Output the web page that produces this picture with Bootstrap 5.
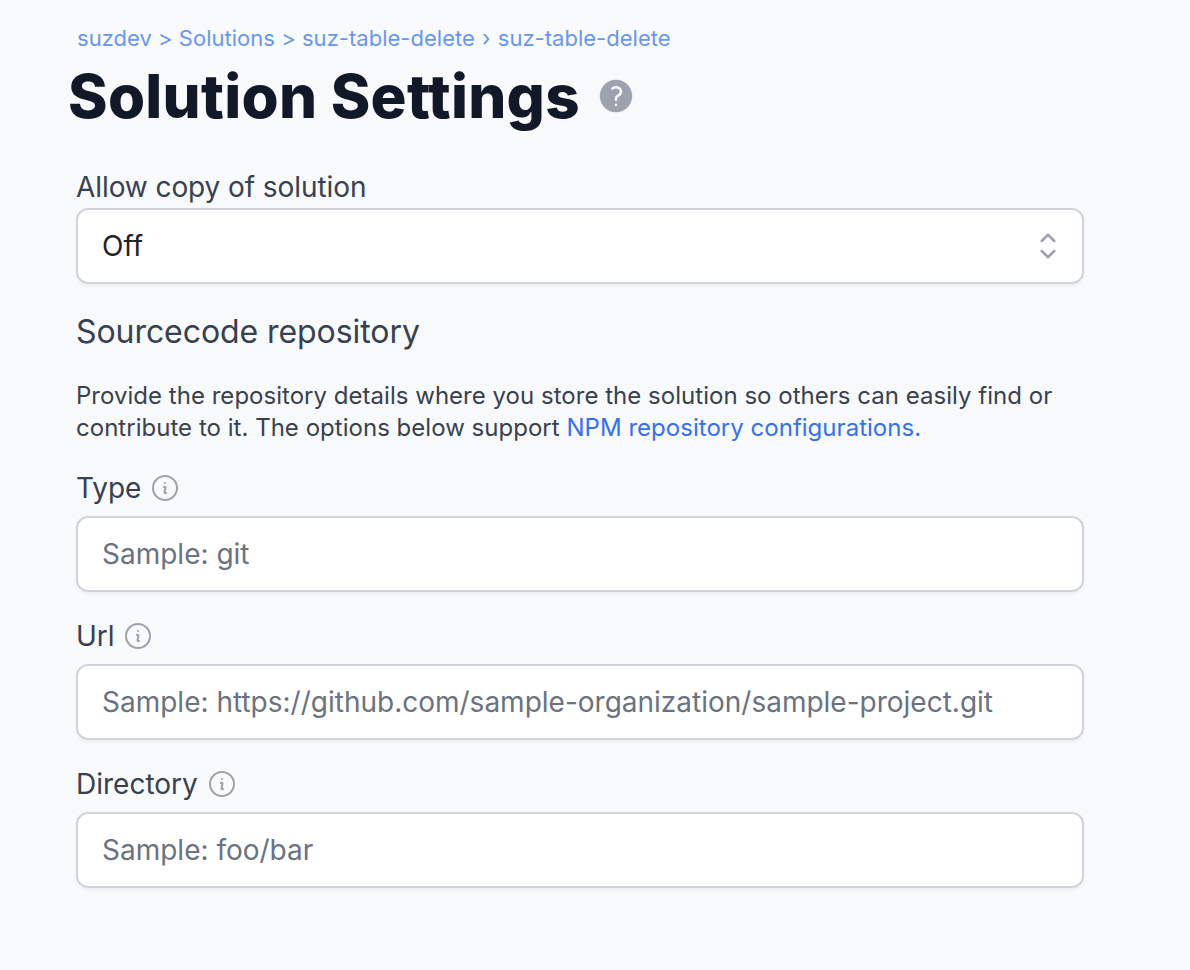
<!DOCTYPE html>
<html lang="en">
<head>
<meta charset="utf-8">
<meta name="viewport" content="width=device-width, initial-scale=1">
<title>Solution Settings</title>
<link href="https://cdn.jsdelivr.net/npm/bootstrap@5.3.0/dist/css/bootstrap.min.css" rel="stylesheet">
<style>
body{background:#f9fafc;color:#374151;font-family:Inter,sans-serif;min-height:970px}
.settings{width:1008px;margin-left:76px;padding-top:22px}
.crumbs{font-size:22px;line-height:32px;color:#6897f0;padding-left:1px;white-space:nowrap;letter-spacing:.02px}
.crumbs a{color:inherit}
.crumb-angle{margin:0 1px}
.page-title{font-size:60px;line-height:72px;font-weight:800;color:#111827;letter-spacing:.28px;margin:6px 0 35px -8px;gap:16px}
.help{width:40px;height:40px;color:#9ca3af;flex:none}
.field-label{font-size:28px;line-height:40px;letter-spacing:-.08px;gap:8px}
.copy-label{margin-bottom:1px}
.info{width:32px;height:32px;color:#9ca3af;flex:none}
.field{height:76px;border:2px solid #d1d5db;border-radius:12px;padding:0 24px;font-size:28px;box-shadow:0 2px 4px rgba(0,0,0,.05);color:#222;background-color:#fff}
.field::placeholder{color:#6b7280;opacity:1}
.picker{padding-right:14px}
.picker svg{width:40px;height:40px;color:#9ca3af}
.section-title{font-size:32px;line-height:40px;font-weight:400;letter-spacing:-.07px;margin:28px 0}
.intro{font-size:24px;line-height:32px;letter-spacing:.025px;white-space:nowrap;margin-bottom:24px}
.intro a{color:#3370f4}
.entry{margin-bottom:24px}
.entry .field-label{margin-bottom:8px}
.dir-label{letter-spacing:0}
</style>
<script src="https://cdn.jsdelivr.net/npm/bootstrap@5.3.0/dist/js/bootstrap.bundle.min.js"></script>
</head>
<body>
<svg class="d-none" xmlns="http://www.w3.org/2000/svg">
<symbol id="info" viewBox="0 0 24 24"><path fill="none" stroke="currentColor" stroke-width="1.5" stroke-linecap="round" stroke-linejoin="round" d="M11.25 11.25l.041-.02a.75.75 0 011.063.852l-.708 2.836a.75.75 0 001.063.853l.041-.021M21 12a9 9 0 11-18 0 9 9 0 0118 0zm-9-3.75h.008v.008H12V8.25z"/></symbol>
</svg>
<main class="settings">
<nav class="crumbs"><a class="text-decoration-none" href="#">suzdev</a> &gt; <a class="text-decoration-none" href="#">Solutions</a> &gt; <a class="text-decoration-none" href="#">suz-table-delete</a> <span class="crumb-angle">›</span> <a class="text-decoration-none" href="#">suz-table-delete</a></nav>
<h1 class="page-title d-flex align-items-center"><span>Solution Settings</span>
<svg class="help" viewBox="0 0 24 24" fill="currentColor"><path fill-rule="evenodd" d="M2.25 12c0-5.385 4.365-9.75 9.75-9.75s9.75 4.365 9.75 9.75-4.365 9.75-9.75 9.75S2.25 17.385 2.25 12zm11.378-3.917c-.89-.777-2.366-.777-3.255 0a.75.75 0 01-.988-1.129c1.454-1.272 3.776-1.272 5.23 0 1.513 1.324 1.513 3.518 0 4.842a3.75 3.75 0 01-.837.552c-.676.328-1.028.774-1.028 1.152v.75a.75.75 0 01-1.5 0v-.75c0-1.279 1.06-2.107 1.875-2.502.182-.088.351-.199.503-.331.83-.727.83-1.857 0-2.584zM12 18a.75.75 0 100-1.5.75.75 0 000 1.5z" clip-rule="evenodd"/></svg></h1>
<div class="field-label copy-label">Allow copy of solution</div>
<button type="button" class="field picker form-control d-flex align-items-center justify-content-between"><span>Off</span>
<svg viewBox="0 0 24 24" fill="none" stroke="currentColor" stroke-width="1.5" stroke-linecap="round" stroke-linejoin="round"><path d="M8.25 15L12 18.75 15.75 15m-7.5-6L12 5.25 15.75 9"/></svg></button>
<h2 class="section-title">Sourcecode repository</h2>
<p class="intro">Provide the repository details where you store the solution so others can easily find or<br>contribute to it. The options below support <a href="#" class="text-decoration-none">NPM repository configurations.</a></p>
<div class="entry">
<label for="type" class="field-label d-flex align-items-center">Type<svg class="info"><use href="#info"/></svg></label>
<input id="type" class="field form-control" placeholder="Sample: git">
</div>
<div class="entry">
<label for="url" class="field-label d-flex align-items-center">Url<svg class="info"><use href="#info"/></svg></label>
<input id="url" class="field form-control" placeholder="Sample: https://github.com/sample-organization/sample-project.git">
</div>
<div class="entry">
<label for="dir" class="field-label dir-label d-flex align-items-center">Directory<svg class="info"><use href="#info"/></svg></label>
<input id="dir" class="field form-control" placeholder="Sample: foo/bar">
</div>
</main>
</body>
</html>
